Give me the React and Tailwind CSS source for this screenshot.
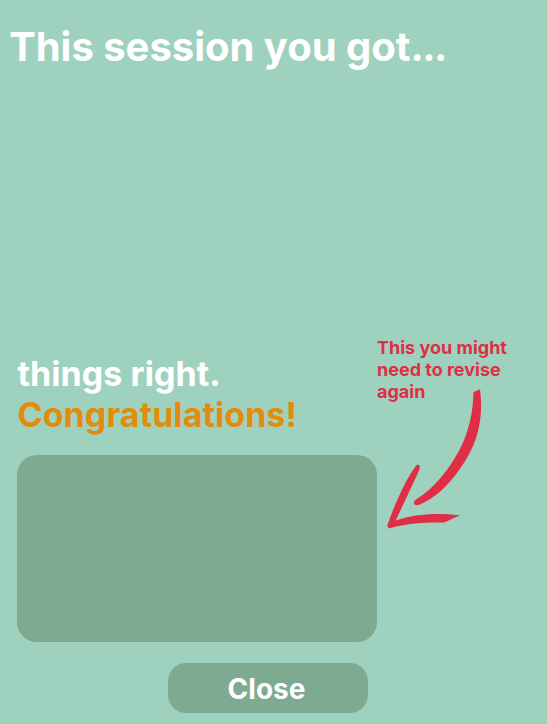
function ReviseArrow() {
  return (
    <svg
      className="-mt-[15px] ml-2 block h-[144px] w-[102px]"
      viewBox="385 388 102 144"
      fill="#df2e45"
      aria-hidden="true"
    >
      <path d="M473.5 391.9 L480 389.2 C483 411 480 433 470.4 451.5 C459 474 440 496 420.5 504.3 C417.5 505.6 414.8 505.7 414.1 503.8 C413.5 501.5 415 500.2 417.5 498.6 C435 487.2 448.5 470 459.5 450 C469 431.5 473.3 411 473.5 391.9 Z" />
      <path d="M415.7 466 C417.5 463.8 420.4 464.6 419.8 467.8 C419.3 470.2 418 473 416.2 476.8 L395.7 520.5 C415 514.4 433 512.6 460 515.3 L444.3 522.5 C422 522.2 405 523.8 388.7 528.4 L387.2 525.8 C394 505.5 405 481 415.7 466 Z" />
    </svg>
  );
}

export default function App() {
  return (
    <main className="flex h-[724px] w-[547px] flex-col overflow-hidden bg-[#9fd2be] font-['Inter',sans-serif] font-bold text-white">
      <h1 className="mt-[23px] ml-[9px] h-[48px] text-[40px] leading-[48px] tracking-[-0.02px] whitespace-nowrap">
        This session you got<span className="tracking-[-1.6px]">...</span>
      </h1>

      <section className="mt-[266px] ml-[17px] flex h-[305px] items-start">
        <div className="w-[360px] shrink-0 pt-4">
          <h2 className="pl-[0.5px] text-[34px] leading-[41px] tracking-[0.06px] whitespace-nowrap">
            things right.
            <br />
            <span className="text-[#e18d0b]">Congratulations!</span>
          </h2>
          <div className="mt-5 h-[187px] rounded-[20px] bg-[#7faa92]" />
        </div>
        <aside className="w-[150px] shrink-0">
          <p className="text-[18px] leading-[22px] text-[#df2e45]">
            This you might
            <br />
            need to revise
            <br />
            again
          </p>
          <ReviseArrow />
        </aside>
      </section>

      <button
        type="button"
        className="mt-[21px] ml-[168px] flex h-[50px] w-[200px] items-center justify-center rounded-[18px] bg-[#7faa92] pr-[3px] pt-[2px] text-[28px] leading-[34px] font-bold"
      >
        Close
      </button>
    </main>
  );
}
